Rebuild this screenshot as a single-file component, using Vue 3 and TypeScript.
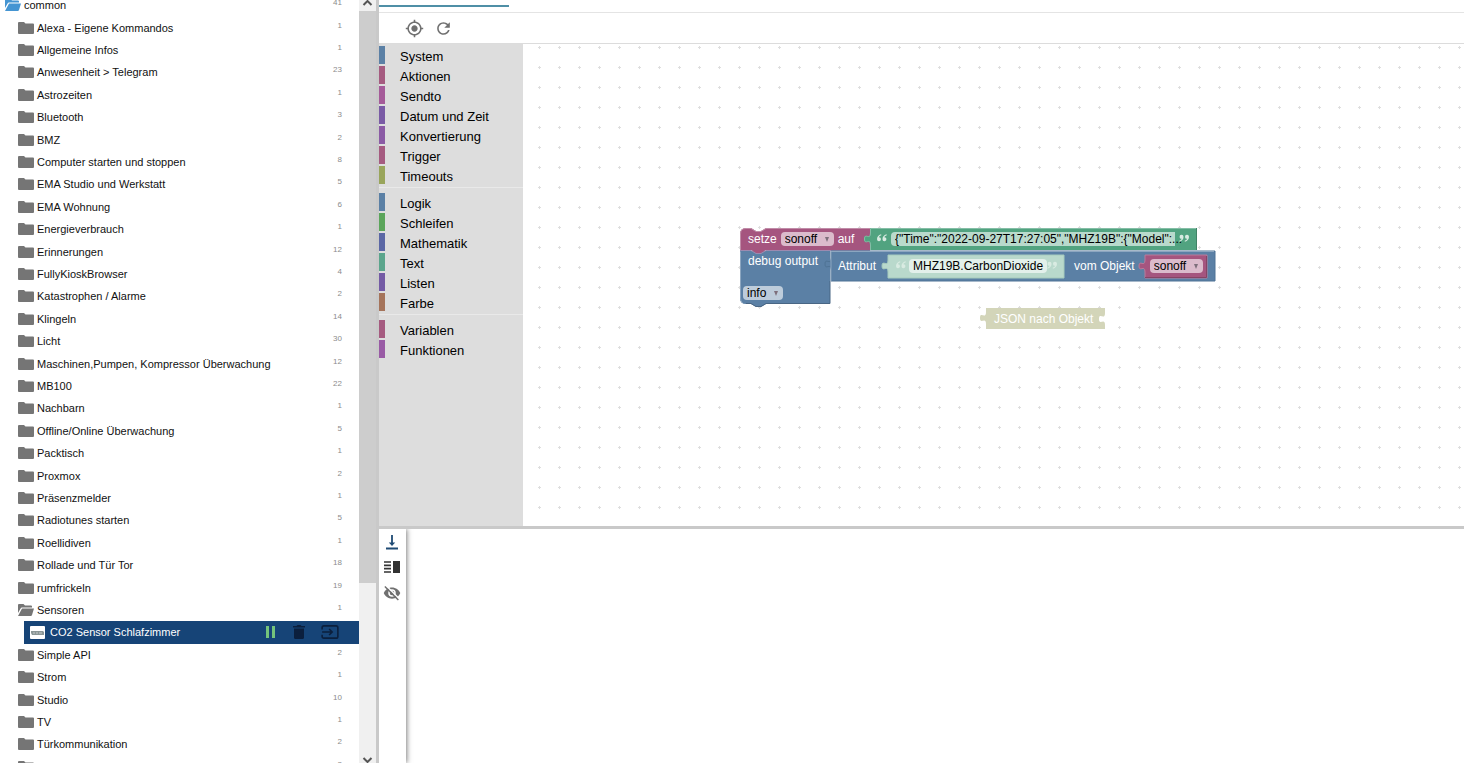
<script setup lang="ts">
import { ref } from 'vue'

interface TreeItem {
  name: string
  count: number
  open?: boolean
}
interface Category {
  name: string
  tone: string
}

const before: TreeItem[] = [
  { name: 'Alexa - Eigene Kommandos', count: 1 },
  { name: 'Allgemeine Infos', count: 1 },
  { name: 'Anwesenheit > Telegram', count: 23 },
  { name: 'Astrozeiten', count: 1 },
  { name: 'Bluetooth', count: 3 },
  { name: 'BMZ', count: 2 },
  { name: 'Computer starten und stoppen', count: 8 },
  { name: 'EMA Studio und Werkstatt', count: 5 },
  { name: 'EMA Wohnung', count: 6 },
  { name: 'Energieverbrauch', count: 1 },
  { name: 'Erinnerungen', count: 12 },
  { name: 'FullyKioskBrowser', count: 4 },
  { name: 'Katastrophen / Alarme', count: 2 },
  { name: 'Klingeln', count: 14 },
  { name: 'Licht', count: 30 },
  { name: 'Maschinen,Pumpen, Kompressor Überwachung', count: 12 },
  { name: 'MB100', count: 22 },
  { name: 'Nachbarn', count: 1 },
  { name: 'Offline/Online Überwachung', count: 5 },
  { name: 'Packtisch', count: 1 },
  { name: 'Proxmox', count: 2 },
  { name: 'Präsenzmelder', count: 1 },
  { name: 'Radiotunes starten', count: 5 },
  { name: 'Roellidiven', count: 1 },
  { name: 'Rollade und Tür Tor', count: 18 },
  { name: 'rumfrickeln', count: 19 },
  { name: 'Sensoren', count: 1, open: true },
]
const after: TreeItem[] = [
  { name: 'Simple API', count: 2 },
  { name: 'Strom', count: 1 },
  { name: 'Studio', count: 10 },
  { name: 'TV', count: 1 },
  { name: 'Türkommunikation', count: 2 },
  { name: '', count: 2 },
]

const groups: Category[][] = [
  [
    { name: 'System', tone: 'steel' },
    { name: 'Aktionen', tone: 'rose' },
    { name: 'Sendto', tone: 'pink' },
    { name: 'Datum und Zeit', tone: 'violet' },
    { name: 'Konvertierung', tone: 'purple' },
    { name: 'Trigger', tone: 'rose' },
    { name: 'Timeouts', tone: 'olive' },
  ],
  [
    { name: 'Logik', tone: 'steel' },
    { name: 'Schleifen', tone: 'green' },
    { name: 'Mathematik', tone: 'indigo' },
    { name: 'Text', tone: 'teal' },
    { name: 'Listen', tone: 'lilac' },
    { name: 'Farbe', tone: 'brown' },
  ],
  [
    { name: 'Variablen', tone: 'rose' },
    { name: 'Funktionen', tone: 'magenta' },
  ],
]

const openQuote = 'M4.500 0Q0 1.500 0 5.500a2.200 2.200 0 1 0 2-2.300Q2.500 1.800 4.800 1zM10.500 0Q6 1.500 6 5.500a2.200 2.200 0 1 0 2-2.300Q8.500 1.800 10.800 1z'
const closeQuote = 'M.500 8Q5 6.500 5 2.500a2.200 2.200 0 1 0-2 2.300Q2.500 6.200.200 7zM6.500 8Q11 6.500 11 2.500a2.200 2.200 0 1 0-2 2.300Q8.500 6.200 6.200 7z'

const jsonText = ref('{"Time":"2022-09-27T17:27:05","MHZ19B":{"Model":...')
const attribute = ref('MHZ19B.CarbonDioxide')
</script>

<template>
  <div class="app">
    <nav class="side" aria-label="Skripte">
      <ul class="tree">
        <li class="root">
          <button class="row">
            <svg class="folder blue" viewBox="0 0 16 12"><path d="M1 0h4.500l1.500 1.500h6q1 0 1 1V3.500H4Q3 3.500 2.600 4.500L0 9V1q0-1 1-1zM4 4.500h12l-2 6.500q-.3 1-1.200 1H0z" /></svg>
            <span class="name">common</span><span class="count">41</span>
          </button>
        </li>
        <li v-for="item in before" :key="item.name">
          <button class="row">
            <svg class="folder" viewBox="0 0 16 12">
              <path v-if="item.open" d="M1 0h4.500l1.500 1.500h6q1 0 1 1V3.500H4Q3 3.500 2.600 4.500L0 9V1q0-1 1-1zM4 4.500h12l-2 6.500q-.3 1-1.200 1H0z" />
              <path v-else d="M1 0h5l1.500 1.500H15q1 0 1 1V11q0 1-1 1H1q-1 0-1-1V1q0-1 1-1z" />
            </svg>
            <span class="name">{{ item.name }}</span><span class="count">{{ item.count }}</span>
          </button>
        </li>
        <li class="selected">
          <button class="script">
            <svg class="badge" viewBox="0 0 15 13"><rect width="15" height="13" rx="1" fill="#fff" /><path d="M1 5h12l1 1v3H2L1 7z" fill="#8b9696" /><path d="M3 7h2m1 0h2m1 0h3" stroke="#c5caca" /></svg>
            <span>CO2 Sensor Schlafzimmer</span>
          </button>
          <button class="act" aria-label="Pause"><svg width="12" height="12" viewBox="0 0 12 12"><path d="M1 0h3v12H1zM7 0h3v12H7z" fill="#75c47c" /></svg></button>
          <button class="act" aria-label="Löschen"><svg width="12" height="14" viewBox="0 0 12 14"><path d="M1 3.500h10V12.500q0 1.500-1.500 1.500h-7Q1 14 1 12.500zM0 1h3.500l1-1h3l1 1H12v1.500H0z" fill="#0b1f3d" /></svg></button>
          <button class="act wide" aria-label="Öffnen"><svg width="18" height="14" viewBox="0 0 20 16"><path d="M1 5V3q0-2 2-2h14q2 0 2 2v10q0 2-2 2H3q-2 0-2-2v-2M1 8h11M9 4.500L12.500 8 9 11.500" fill="none" stroke="#0b1f3d" stroke-width="1.800" /></svg></button>
        </li>
        <li v-for="item in after" :key="item.name">
          <button class="row">
            <svg class="folder" viewBox="0 0 16 12"><path d="M1 0h5l1.500 1.500H15q1 0 1 1V11q0 1-1 1H1q-1 0-1-1V1q0-1 1-1z" /></svg>
            <span class="name">{{ item.name }}</span><span class="count">{{ item.count }}</span>
          </button>
        </li>
      </ul>
      <div class="scroll">
        <svg class="arrow" viewBox="0 0 17 11"><path d="M4.500 5l4-4 4 4" /></svg>
        <div class="thumb"></div>
        <svg class="arrow" viewBox="0 0 17 11"><path d="M4.500 6l4 4 4-4" /></svg>
      </div>
    </nav>

    <main class="main">
      <div class="tabs"><div class="ink"></div></div>
      <div class="tools">
        <button aria-label="Zentrieren">
          <svg width="19" height="19" viewBox="0 0 24 24"><path fill="#707070" d="M12 8c-2.210 0-4 1.790-4 4s1.790 4 4 4 4-1.790 4-4-1.790-4-4-4zm8.940 3c-.46-4.170-3.770-7.480-7.940-7.940V1h-2v2.060C6.830 3.520 3.520 6.830 3.060 11H1v2h2.060c.46 4.170 3.770 7.480 7.940 7.940V23h2v-2.060c4.170-.46 7.480-3.770 7.940-7.940H23v-2h-2.060zM12 19c-3.870 0-7-3.130-7-7s3.130-7 7-7 7 3.130 7 7-3.130 7-7 7z" /></svg>
        </button>
        <button aria-label="Neu laden">
          <svg width="19" height="19" viewBox="0 0 24 24"><path fill="#707070" d="M17.650 6.350C16.200 4.900 14.210 4 12 4c-4.420 0-7.990 3.580-7.990 8s3.570 8 7.990 8c3.730 0 6.840-2.550 7.730-6h-2.080c-.82 2.330-3.040 4-5.650 4-3.310 0-6-2.690-6-6s2.690-6 6-6c1.660 0 3.140.69 4.220 1.780L13 11h7V4l-2.350 2.350z" /></svg>
        </button>
      </div>

      <div class="editor">
        <div class="toolbox">
          <div v-for="(group, i) in groups" :key="i" class="group">
            <button v-for="cat in group" :key="cat.name" class="cat" :class="cat.tone">{{ cat.name }}</button>
          </div>
        </div>

        <div class="canvas">
          <svg class="grid" width="100%" height="100%">
            <defs>
              <pattern id="dots" x="6" y="-7" width="20" height="20" patternUnits="userSpaceOnUse"><path d="M9 10.500h3M10.500 9v3" stroke="#dedede" /></pattern>
            </defs>
            <rect width="100%" height="100%" fill="url(#dots)" />
          </svg>

          <div class="stack">
            <svg class="shape" width="480" height="84" viewBox="0 0 480 84">
              <path d="M0 23H90V76H26l-5 3h-5l-5-3H6Q0 76 0 70z" fill="#5b80a5" />
              <path d="M90 53V75.500H26l-5 3h-5l-5-3H6" fill="none" stroke="#496684" />
              <path d="M.5 70V23.500M.5 70q0 3 2 5" fill="none" stroke="#8ca6c0" />
              <path d="M0 6Q0 0 6 0h5l5 3h5l5-3H130V22H26l-5 3h-5l-5-3H0z" fill="#a5557f" />
              <path d="M.5 22V6Q.5 .5 6 .5h5l5 3h5l5-3H130" fill="none" stroke="#c08ca8" />
              <path d="M0 22.500h11l5 3h5l5-3h104" fill="none" stroke="#9c8ab0" />
              <path d="M130 0H457V22H130V17c0-8-6 1-6-6s6 2 6-6z" fill="#51a380" />
              <path d="M456.500 0V22" fill="none" stroke="#418266" />
              <path d="M130.500 22V17c0-8-6 1-6-6s6 2 6-6V.5H456" fill="none" stroke="#85bea6" />
              <path d="M91 23H475V53H91V42c0-8-6 1-6-6s6 2 6-6z" fill="#5b80a5" stroke="#4f7395" />
              <path d="M91 53V23.500H474" fill="none" stroke="#8ca6c0" />
              <path d="M148 27H324V50H148V44c0-8-6 1-6-6s6 2 6-6z" fill="#b9d9cc" stroke="#a6cbbd" />
              <path d="M405 27H467V50H405V44c0-8-6 1-6-6s6 2 6-6z" fill="#a5557f" stroke="#b97c9b" />
              <path d="M405 49.500H466.500V28" fill="none" stroke="#864465" />
            </svg>

            <div class="line set">
              <label for="v1">setze</label>
              <span class="drop wide-drop"><select id="v1"><option>sonoff</option></select><i></i></span>
              <span>auf</span>
            </div>
            <div class="line text1">
              <svg class="quote" viewBox="0 0 11 8"><path :d="openQuote" /></svg>
              <input v-model="jsonText" class="long" aria-label="Text" />
              <svg class="quote" viewBox="0 0 11 8"><path :d="closeQuote" /></svg>
            </div>
            <div class="line debug"><span>debug output</span></div>
            <div class="line level">
              <span class="drop"><select aria-label="Stufe"><option>info</option></select><i></i></span>
            </div>
            <div class="line attr">
              <label for="attr">Attribut</label>
              <span class="shadow">
                <svg class="quote" viewBox="0 0 11 8"><path :d="openQuote" /></svg>
                <input id="attr" v-model="attribute" />
                <svg class="quote" viewBox="0 0 11 8"><path :d="closeQuote" /></svg>
              </span>
              <label for="v2">vom Objekt</label>
              <span class="drop wide-drop"><select id="v2"><option>sonoff</option></select><i></i></span>
            </div>
          </div>

          <div class="loose">
            <svg class="shape" width="126" height="22" viewBox="0 0 126 22">
              <path d="M6 0H125V5c0 8-6-1-6 6s6-2 6 6V21H6V16c0-8-6 1-6-6s6 2 6-6z" fill="#d3d5b9" />
            </svg>
            <span>JSON nach Objekt</span>
          </div>
        </div>
      </div>

      <div class="log">
        <div class="logbar">
          <button aria-label="Nach unten"><svg width="14" height="16" viewBox="0 0 14 16"><path d="M7 1v9M1 14.500h12" stroke="#1f4b74" stroke-width="1.800" /><path d="M3.800 8.500h6.400L7 12z" fill="#1f4b74" /></svg></button>
          <button aria-label="Anordnung"><svg width="16" height="12" viewBox="0 0 16 12"><path d="M0 1h7M0 4.300h7M0 7.600h7M0 11h7" stroke="#333" stroke-width="1.700" /><path d="M9 0h7v12H9z" fill="#333" /></svg></button>
          <button aria-label="Verbergen">
            <svg width="18" height="18" viewBox="0 0 24 24"><path d="M12 4.500C7 4.500 2.700 7.600 1 12c1.700 4.400 6 7.500 11 7.500S21.300 16.400 23 12C21.300 7.600 17 4.500 12 4.500z" fill="#707070" /><circle cx="12" cy="12" r="5" fill="#fff" /><circle cx="12" cy="12" r="3" fill="#707070" /><path d="M4 2l18 18" stroke="#fff" stroke-width="2" /><path d="M2.500 3.300l18 18" stroke="#707070" stroke-width="2" /></svg>
          </button>
        </div>
        <div class="output"></div>
      </div>
    </main>
  </div>
</template>

<style>
body {
  margin: 0;
  overflow: hidden;
}
</style>

<style scoped>
.app {
  display: flex;
  height: 100vh;
  overflow: hidden;
  background: #fff;
  font-family: "Liberation Sans", Arial, sans-serif;
  color: #111;
}
button {
  border: 0;
  padding: 0;
  background: none;
  font: inherit;
  color: inherit;
  text-align: left;
}
svg {
  display: block;
  flex: none;
}
.side {
  display: flex;
  width: 376px;
  flex: none;
  border-right: 3px solid #c9c9c9;
}
.tree {
  flex: 1;
  display: grid;
  grid-auto-rows: 1fr;
  height: 784px;
  margin: -6px 0 0;
  padding: 0;
  list-style: none;
  font-size: 11px;
}
.tree li {
  display: flex;
  min-height: 0;
  padding-left: 18px;
}
.tree .root {
  padding-left: 5px;
}
.row {
  flex: 1;
  display: flex;
  align-items: center;
  gap: 3px;
  padding-right: 17px;
}
.folder {
  width: 16px;
  height: 12px;
  fill: #757575;
}
.folder.blue {
  fill: #4595d2;
}
.name {
  flex: 1;
  line-height: 14px;
  white-space: nowrap;
}
.count {
  padding-bottom: 4px;
  font-size: 8px;
  line-height: 10px;
  color: #8c8c8c;
}
.tree .selected {
  align-items: center;
  margin-left: 24px;
  padding: 0 12px 0 6px;
  background: #164477;
  color: #fff;
}
.script {
  flex: 1;
  display: flex;
  align-items: center;
  gap: 5px;
}
.badge {
  width: 15px;
  height: 13px;
}
.act {
  width: 28px;
  display: flex;
  justify-content: center;
}
.act.wide {
  width: 34px;
}
.scroll {
  width: 17px;
  display: flex;
  flex-direction: column;
  background: #f0f0f0;
}
.arrow {
  height: 11px;
  fill: none;
  stroke: #555;
  stroke-width: 2;
}
.thumb {
  flex: 1;
  margin-bottom: 169px;
  background: #cdcdcd;
}
.main {
  flex: 1;
  min-width: 0;
  display: flex;
  flex-direction: column;
}
.tabs {
  height: 12px;
  border-bottom: 1px solid #e4e4e4;
}
.ink {
  width: 130px;
  height: 2px;
  margin-top: 5px;
  background: #4f8fa6;
}
.tools {
  display: flex;
  align-items: center;
  gap: 10px;
  height: 30px;
  padding-left: 26px;
  border-bottom: 1px solid #dcdcdc;
}
.editor {
  flex: 1;
  min-height: 0;
  display: flex;
  border-bottom: 3px solid #c9c9c9;
}
.toolbox {
  width: 144px;
  flex: none;
  padding-top: 2px;
  background: #ddd;
}
.group + .group {
  margin-top: 3px;
  padding-top: 5px;
  border-top: 1px solid #e9e9e9;
}
.cat {
  display: block;
  width: 100%;
  height: 18px;
  margin-bottom: 2px;
  padding-left: 15px;
  border-left: 6px solid;
  font-size: 13px;
  line-height: 22px;
  white-space: nowrap;
  color: #000;
}
.steel { border-color: #5b80a5; }
.rose { border-color: #a55b80; }
.pink { border-color: #a55b99; }
.violet { border-color: #7a5ba5; }
.purple { border-color: #8b5ba5; }
.olive { border-color: #99a55b; }
.green { border-color: #5ba55b; }
.indigo { border-color: #5b67a5; }
.teal { border-color: #5ba58c; }
.lilac { border-color: #745ba5; }
.brown { border-color: #a5745b; }
.magenta { border-color: #995ba5; }
.canvas {
  position: relative;
  flex: 1;
  overflow: hidden;
  font-size: 12px;
}
.grid,
.shape {
  position: absolute;
  left: 0;
  top: 0;
}
.shape {
  overflow: visible;
}
.stack {
  position: absolute;
  left: 217px;
  top: 184px;
  width: 480px;
  height: 84px;
  color: #fff;
}
.line {
  position: absolute;
  display: flex;
  align-items: center;
  height: 22px;
  white-space: nowrap;
}
.set {
  left: 8px;
  top: 0;
  gap: 4px;
}
.text1 {
  left: 137px;
  top: 0;
}
.debug {
  left: 8px;
  top: 22px;
}
.level {
  left: 3px;
  top: 54px;
}
.attr {
  left: 98px;
  top: 27px;
}
.drop {
  position: relative;
  display: flex;
  width: 40px;
  height: 14px;
}
.wide-drop {
  width: 53px;
}
.drop select {
  appearance: none;
  width: 100%;
  padding: 0 0 0 4px;
  border: 0;
  border-radius: 4px;
  background: rgba(255, 255, 255, 0.6);
  font: inherit;
  color: #000;
}
.drop i {
  position: absolute;
  right: 5px;
  top: 5px;
  border: 2px solid transparent;
  border-top: 5px solid #7e6f7c;
  border-bottom: 0;
  pointer-events: none;
}
.quote {
  position: relative;
  width: 10px;
  height: 8px;
  margin-bottom: 3px;
  fill: #d9ebe2;
}
input {
  width: 138px;
  height: 14px;
  box-sizing: border-box;
  padding: 0 0 0 4px;
  border: 0;
  border-radius: 4px;
  background: rgba(255, 255, 255, 0.6);
  font: inherit;
  color: #000;
}
input.long {
  width: 297px;
  margin: 0 -9px 0 4px;
  background: linear-gradient(#b9dacc, #b9dacc) 0 0 / 284px 100% no-repeat;
}
.shadow {
  display: flex;
  align-items: center;
  margin: 0 17px 0 20px;
}
.shadow input {
  margin-left: 3px;
}
.attr .wide-drop {
  margin-left: 15px;
}
.loose {
  position: absolute;
  left: 457px;
  top: 264px;
  display: flex;
  align-items: center;
  width: 126px;
  height: 22px;
  color: #fff;
}
.loose span {
  position: relative;
  margin-left: 14px;
  white-space: nowrap;
}
.log {
  display: flex;
  height: 234px;
  overflow: hidden;
}
.logbar {
  width: 27px;
  display: flex;
  flex-direction: column;
  align-items: center;
  gap: 11px;
  padding: 5px 2px 0 0;
  box-sizing: border-box;
  box-shadow: 1px 0 5px rgba(0, 0, 0, 0.5);
}
.output {
  flex: 1;
}
</style>
